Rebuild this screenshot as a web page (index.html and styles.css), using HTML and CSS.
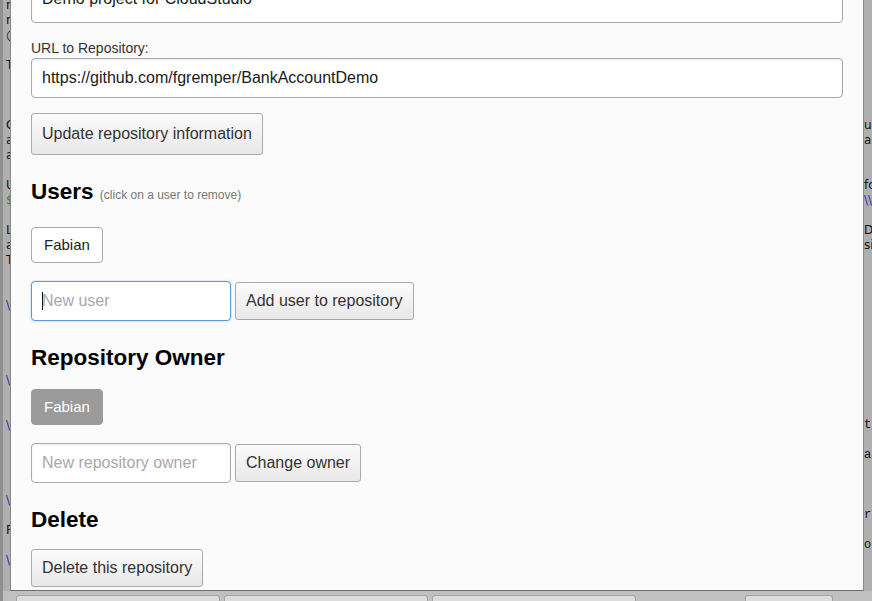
FILE: index.html
```html
<!DOCTYPE html>
<html lang="en">
<head>
<meta charset="utf-8">
<title>Repository settings</title>
<link rel="stylesheet" href="styles.css">
</head>
<body>
<div class="backdrop">
  <div class="bg-lines">
    <div class="ln"><span class="l">ra</span><span class="r"></span></div>
    <div class="ln"><span class="l">rap</span><span class="r"></span></div>
    <div class="ln"><span class="l">◯</span><span class="r"></span></div>
    <div class="ln"><span class="l"></span><span class="r"></span></div>
    <div class="ln"><span class="l">Ty</span><span class="r"></span></div>
    <div class="ln"><span class="l"></span><span class="r"></span></div>
    <div class="ln"><span class="l"></span><span class="r"></span></div>
    <div class="ln"><span class="l"></span><span class="r"></span></div>
    <div class="ln"><span class="l">C</span><span class="r">ue</span></div>
    <div class="ln"><span class="l">a</span><span class="r">ab</span></div>
    <div class="ln"><span class="l">a</span><span class="r"></span></div>
    <div class="ln"><span class="l"></span><span class="r"></span></div>
    <div class="ln"><span class="l">U</span><span class="r">fo</span></div>
    <div class="ln"><span class="l green">$</span><span class="r blue">\\</span></div>
    <div class="ln"><span class="l"></span><span class="r"></span></div>
    <div class="ln"><span class="l">L</span><span class="r">D.</span></div>
    <div class="ln"><span class="l">a</span><span class="r">sir</span></div>
    <div class="ln"><span class="l">T</span><span class="r"></span></div>
    <div class="ln"><span class="l"></span><span class="r"></span></div>
    <div class="ln"><span class="l"></span><span class="r"></span></div>
    <div class="ln"><span class="l blue">\\</span><span class="r"></span></div>
    <div class="ln"><span class="l"></span><span class="r"></span></div>
    <div class="ln"><span class="l"></span><span class="r"></span></div>
    <div class="ln"><span class="l"></span><span class="r"></span></div>
    <div class="ln"><span class="l"></span><span class="r"></span></div>
    <div class="ln"><span class="l blue">\\</span><span class="r"></span></div>
    <div class="ln"><span class="l"></span><span class="r"></span></div>
    <div class="ln"><span class="l"></span><span class="r"></span></div>
    <div class="ln"><span class="l blue">\\</span><span class="r mono">t</span></div>
    <div class="ln"><span class="l"></span><span class="r"></span></div>
    <div class="ln"><span class="l"></span><span class="r mono">a</span></div>
    <div class="ln"><span class="l"></span><span class="r"></span></div>
    <div class="ln"><span class="l"></span><span class="r"></span></div>
    <div class="ln"><span class="l blue">\\</span><span class="r"></span></div>
    <div class="ln"><span class="l"></span><span class="r mono">r</span></div>
    <div class="ln"><span class="l">F</span><span class="r"></span></div>
    <div class="ln"><span class="l"></span><span class="r mono">os</span></div>
    <div class="ln"><span class="l blue">\\</span><span class="r"></span></div>
  </div>
  <div class="tabs">
    <span class="tab"></span>
    <span class="tab"></span>
    <span class="tab"></span>
    <span class="tab tab-small"></span>
  </div>
</div>

<div class="modal">
  <div class="modal-body">
    <input class="field wide first" type="text" value="Demo project for CloudStudio">
    <label class="label">URL to Repository:</label>
    <input class="field wide" type="text" value="https://github.com/fgremper/BankAccountDemo">
    <button class="btn btn-lg update">Update repository information</button>

    <h2 class="heading">Users <small class="hint">(click on a user to remove)</small></h2>
    <div class="chips users-chips"><span class="chip">Fabian</span></div>
    <div class="row">
      <span class="focus-wrap"><input class="field short focused" type="text" placeholder="New user"></span>
      <button class="btn">Add user to repository</button>
    </div>

    <h2 class="heading">Repository Owner</h2>
    <div class="chips owner-chips"><span class="chip owner">Fabian</span></div>
    <div class="row">
      <input class="field short" type="text" placeholder="New repository owner">
      <button class="btn">Change owner</button>
    </div>

    <h2 class="heading">Delete</h2>
    <button class="btn delete">Delete this repository</button>
  </div>
</div>
</body>
</html>
```

FILE: styles.css
```css
html, body {
  margin: 0;
  padding: 0;
}

body {
  width: 872px;
  height: 601px;
  overflow: hidden;
  position: relative;
  background: #afafaf;
  font-family: "Liberation Sans", Arial, Helvetica, sans-serif;
}

/* ---------- backdrop (dimmed page behind the dialog) ---------- */
.backdrop {
  display: flex;
  flex-direction: column;
  height: 601px;
  border-left: 3px solid #8f8f8f;
  box-sizing: border-box;
}

.bg-lines {
  flex: 1;
  overflow: hidden;
  margin-top: -2px;
  font-family: "DejaVu Sans", sans-serif;
  font-size: 12px;
  color: #111;
}

.ln {
  display: flex;
  justify-content: space-between;
  height: 15px;
  line-height: 15px;
  white-space: nowrap;
}

.ln .l {
  padding-left: 3px;
}

.ln .r {
  width: 8px;
  overflow: visible;
}

.blue { color: #2b2fa8; }
.green { color: #3b7a34; }
.mono { font-family: "Liberation Mono", monospace; }

.tabs {
  height: 10px;
  flex: none;
  display: flex;
  align-items: flex-end;
  gap: 4px;
  padding-left: 13px;
  background: #c0c0c0;
}

.tab {
  width: 202px;
  height: 5px;
  background: #dcdcdc;
  border: 1px solid #a3a3a3;
  border-bottom: none;
  border-radius: 3px 3px 0 0;
}

.tab-small {
  width: 86px;
  margin-left: 105px;
}

/* ---------- dialog ---------- */
.modal {
  position: absolute;
  left: 10px;
  top: 0;
  width: 854px;
  height: 591px;
  box-sizing: border-box;
  background: #fbfbfb;
  border-left: 1px solid #8a8a8a;
  border-right: 1px solid #8a8a8a;
  border-bottom: 1px solid #707070;
  padding: 0 20px;
  overflow: hidden;
}

.modal-body {
  display: flex;
  flex-direction: column;
  align-items: flex-start;
  color: #333;
}

.field {
  box-sizing: border-box;
  height: 40px;
  margin: 0;
  padding: 0 10px;
  border: 1px solid #aaaaaa;
  border-radius: 4px;
  background: #fff;
  box-shadow: inset 0 1px 2px rgba(0, 0, 0, 0.09);
  font-family: inherit;
  font-size: 16px;
  color: #1a1a1a;
  outline: none;
}

.field::placeholder {
  color: #a8a8a8;
}

.wide {
  width: 100%;
}

.first {
  height: 48px;
  margin-top: -25px;
}

.short {
  width: 200px;
}

.focused {
  border-color: #5a9ad8;
  box-shadow: 0 0 2px rgba(80, 150, 220, 0.5);
}

.focus-wrap {
  position: relative;
  display: block;
}

.focus-wrap::after {
  content: "";
  position: absolute;
  left: 11px;
  top: 11px;
  width: 1px;
  height: 18px;
  background: #111;
}

.label {
  display: block;
  margin-top: 16px;
  margin-bottom: 1px;
  font-size: 14px;
  line-height: 18px;
  color: #333;
}

.btn {
  box-sizing: border-box;
  height: 38px;
  margin: 0;
  padding: 0 10px;
  border: 1px solid #aaaaaa;
  border-radius: 3px;
  background: linear-gradient(#fbfbfb, #e8e8e8);
  font-family: inherit;
  font-size: 16px;
  color: #333;
  white-space: nowrap;
}

.btn-lg {
  height: 42px;
}

.update {
  margin-top: 15px;
}

.heading {
  margin: 24px 0 0;
  font-size: 22.5px;
  line-height: 26px;
  font-weight: bold;
  color: #000;
}

.hint {
  font-size: 12px;
  line-height: 1;
  font-weight: normal;
  color: #777;
}

.chips {
  display: flex;
  gap: 6px;
}

.users-chips {
  margin-top: 22px;
}

.owner-chips {
  margin-top: 18px;
}

.chip {
  box-sizing: border-box;
  height: 36px;
  line-height: 34px;
  padding: 0 12px;
  border: 1px solid #aaaaaa;
  border-radius: 4px;
  background: #fff;
  font-size: 15px;
  color: #222;
}

.chip.owner {
  background: #9b9b9b;
  border-color: #9b9b9b;
  color: #fff;
}

.row {
  display: flex;
  align-items: center;
  gap: 4px;
  margin-top: 18px;
}

.delete {
  margin-top: 16px;
}
```
